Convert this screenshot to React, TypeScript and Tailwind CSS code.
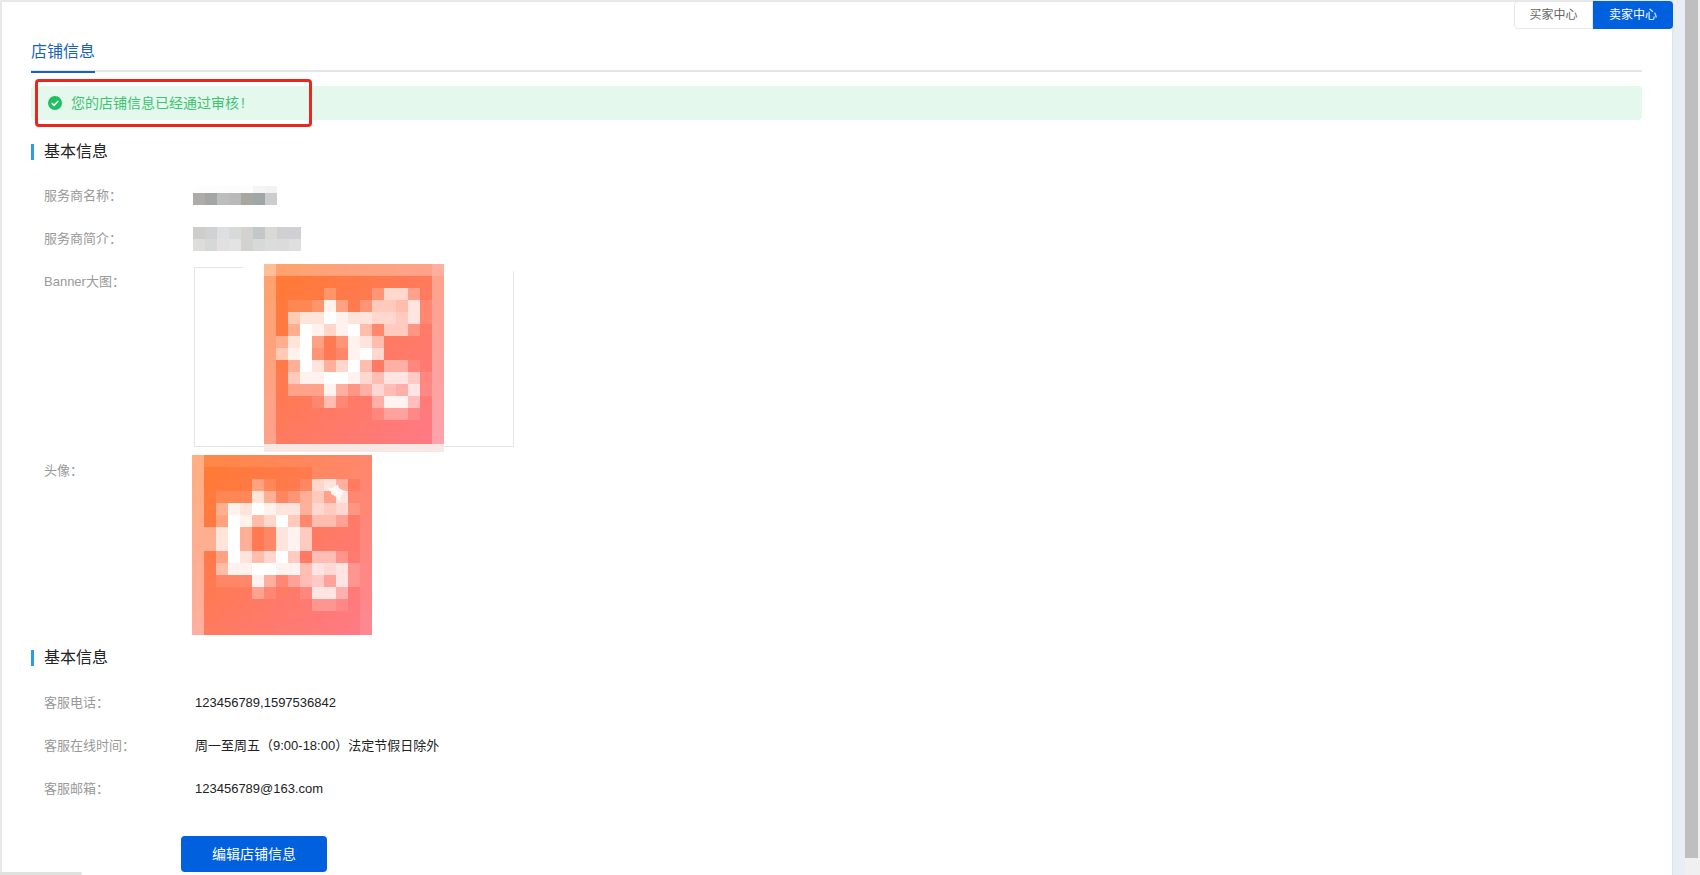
const BANNER = [
  "533333333333334",
  "300000000000003",
  "300002000277303",
  "301129302665813",
  "30688a988776813",
  "304a979a5166203",
  "348a30298500003",
  "369a2019a700003",
  "304a847a5044103",
  "30699aa97588613",
  "303339424754813",
  "300015100499503",
  "300000000133103",
  "300000000000003",
  "300000000000003",
];

const AVATAR = [
  "411111111111111",
  "400000000011111",
  "400003100178401",
  "401118412463811",
  "40498a988476721",
  "403a957a6155301",
  "448a40189600001",
  "448a40189600001",
  "403a857a6055201",
  "40599aa99587821",
  "401119413563821",
  "400003100188401",
  "400000000022101",
  "400000000000001",
  "400000000000001",
];

function Mosaic({ rows, className, children }: { rows: string[]; className: string; children?: React.ReactNode }) {
  const cells = [];
  for (let y = 0; y < 15; y++) {
    for (let x = 0; x < 15; x++) {
      const ch = rows[y][x] ?? "0";
      const a = ch === "a" ? 1 : Number(ch) / 10;
      const t = (x + y) / 28;
      const g = 122;
      const b = Math.round(48 + t * 85);
      const mix = (c: number) => Math.round(c + (255 - c) * a);
      cells.push(
        <rect key={`${x}-${y}`} x={x * 12} y={y * 12} width="12.5" height="12.5" fill={`rgb(${mix(255)},${mix(g)},${mix(b)})`} />
      );
    }
  }
  return (
    <svg className={className} width="180" height="180" viewBox="0 0 180 180">
      {cells}
      {children}
    </svg>
  );
}

function Blur({ colors, size }: { colors: string[]; size: string }) {
  return (
    <div className="flex">
      {colors.map((c, i) => (
        <div key={i} className={size} style={{ backgroundColor: c }} />
      ))}
    </div>
  );
}

function SectionTitle({ title }: { title: string }) {
  return (
    <div className="flex items-center h-4 border-l-[3px] border-[#2a9de8] pl-[10px] text-base text-[#222]">{title}</div>
  );
}

function Row({ label, children }: { label: string; children: React.ReactNode }) {
  return (
    <div className="flex items-center h-[43px] pl-[44px] text-[13px]">
      <div className="w-[149px] text-[#999]">{label}</div>
      <div className="text-[#222]">{children}</div>
    </div>
  );
}

export default function App() {
  return (
    <div
      className="flex h-[875px] overflow-hidden bg-white"
      style={{ fontFamily: '"Liberation Sans", "Noto Sans CJK SC", sans-serif' }}
    >
      <div className="relative w-[1672px] shrink-0 border-l-2 border-t-2 border-[#e8e8e8]">
        <div className="flex justify-end -mt-px">
          <button className="w-[79px] h-[28px] bg-white border border-[#e5e7eb] rounded-l text-xs text-[#666]">买家中心</button>
          <button className="w-[80px] h-[28px] bg-[#0060dd] rounded-r text-xs text-white -mr-px">卖家中心</button>
        </div>

        <div className="ml-[29px] mr-[30px] mt-[11px]">
          <div className="border-b-2 border-[#e5e5e5] h-8">
            <div className="inline-block w-16 h-8 border-b-2 border-[#1a62c0] text-base leading-[21px] text-[#1a62c0]">店铺信息</div>
          </div>
          <div className="flex items-center mt-[14px] h-[34px] pl-4 bg-[#e5f8ee] rounded text-sm text-[#3cc470]">
            <svg width="16" height="16" viewBox="0 0 16 16" className="mr-2">
              <circle cx="8" cy="8" r="7" fill="#1fc05f" />
              <path d="M4.8 8.2l2.2 2.1 4.2-4.3" fill="none" stroke="#fff" strokeWidth="1.6" />
            </svg>
            您的店铺信息已经通过审核<span className="ml-[2px]">!</span>
          </div>
        </div>

        <div className="ml-[29px] mt-6">
          <SectionTitle title="基本信息" />
        </div>
        <div className="mt-[14px] -ml-[2px]">
          <Row label="服务商名称：">
            <div className="flex flex-col">
              <Blur size="w-3 h-[7px]" colors={["#fdfdfd", "#fdfdfd", "#fcfcfc", "#fcfcfc", "#fdfdfd", "#f5f5f6", "#f1f2f4"]} />
              <Blur size="w-3 h-3" colors={["#aeaca8", "#a4a6a6", "#bdbdbd", "#b9b9b9", "#a8a6a0", "#a0a5a6", "#cbcdcd"]} />
            </div>
          </Row>
          <Row label="服务商简介：">
            <div className="flex flex-col">
              <Blur size="w-3 h-3" colors={["#cdcdcb", "#cfd1d2", "#dddfe2", "#d8d9d9", "#d3d2d0", "#c4c7ca", "#d9dad6", "#d0d0d3", "#d0cfd3"]} />
              <Blur size="w-3 h-3" colors={["#dedddc", "#d6d8d7", "#e2e1df", "#e3e3e3", "#d3d2d0", "#d6d9d9", "#dadddb", "#dbdbdc", "#dfdfe0"]} />
            </div>
          </Row>
        </div>

        <div className="flex -ml-[2px] pl-[44px] text-[13px] h-[195px]">
          <div className="w-[149px] text-[#999] pt-[12px]">Banner大图：</div>
          <div className="relative w-[320px] h-[180px] mt-[7px] border border-[#e5e5e5] ml-[1px]">
            <div className="absolute -top-[4px] left-[48px] w-[272px] h-[7px] bg-white" />
            <Mosaic rows={BANNER} className="absolute -top-[4px] left-[69px]" />
            <div className="absolute top-[176px] left-[69px] w-[180px] h-2 bg-[#f8e8e4]" />
          </div>
        </div>

        <div className="flex -ml-[2px] pl-[44px] text-[13px] h-[191px]">
          <div className="w-[148px] text-[#999] pt-[6px]">头像：</div>
          <Mosaic rows={AVATAR} className="mt-0">
            <path d="M134 32c5 2 8 1 12-3 0 4 3 6 8 7-4 2-6 4-6 10-3-4-6-6-9-7 1-2-1-4-5-7z" fill="#fff" opacity="0.9" />
          </Mosaic>
        </div>

        <div className="ml-[29px] mt-1">
          <SectionTitle title="基本信息" />
        </div>
        <div className="mt-[15px] -ml-[2px]">
          <Row label="客服电话："><span className="pl-[2px]">123456789,1597536842</span></Row>
          <Row label="客服在线时间："><span className="pl-[2px]">周一至周五（9:00-18:00）法定节假日除外</span></Row>
          <Row label="客服邮箱："><span className="pl-[2px]">123456789@163.com</span></Row>
        </div>

        <button className="block ml-[179px] mt-[26px] w-[146px] h-9 bg-[#0060dd] rounded-sm text-sm text-white">编辑店铺信息</button>

        <div className="absolute left-[33px] top-[77px] w-[277px] h-12 border-[3px] border-[#e8281c] rounded" />
        <div className="absolute -left-[2px] bottom-0 w-[82px] h-[3px] bg-[#dfe3df] rounded-r" />
      </div>
      <div className="w-[13px] bg-[#e9edf4] border-l border-[#dde1e8]" />
      <div className="flex-1 bg-[#f0f0f0]">
        <div className="w-[13px] h-[858px] bg-[#bfbfbf]" />
      </div>
    </div>
  );
}
